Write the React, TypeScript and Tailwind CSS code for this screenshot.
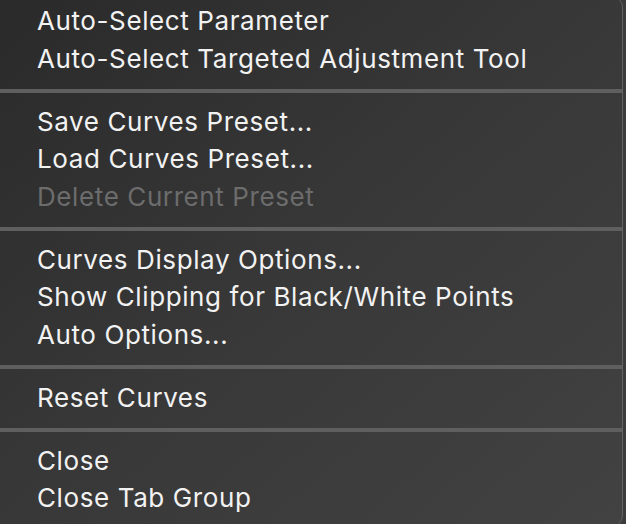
type Item = { label: string; disabled?: boolean }

const groups: Item[][] = [
  [{ label: 'Auto-Select Parameter' }, { label: 'Auto-Select Targeted Adjustment Tool' }],
  [
    { label: 'Save Curves Preset...' },
    { label: 'Load Curves Preset...' },
    { label: 'Delete Current Preset', disabled: true },
  ],
  [
    { label: 'Curves Display Options...' },
    { label: 'Show Clipping for Black/White Points' },
    { label: 'Auto Options...' },
  ],
  [{ label: 'Reset Curves' }],
  [{ label: 'Close' }, { label: 'Close Tab Group' }],
]

function MenuRow({ item }: { item: Item }): JSX.Element {
  return (
    <div
      className={
        item.disabled
          ? 'h-[37.5px] pl-[37px] text-[26px] tracking-[0.6px] leading-[37.5px] text-[#6c6c6c] whitespace-nowrap'
          : 'h-[37.5px] pl-[37px] text-[26px] tracking-[0.6px] leading-[37.5px] text-[#f2f2f2] whitespace-nowrap'
      }
    >
      {item.label}
    </div>
  )
}

function Separator(): JSX.Element {
  return (
    <div className="pt-[12px] pb-[10px]">
      <div className="h-[3.5px] bg-[#5f5f5f]" />
    </div>
  )
}

export default function App(): JSX.Element {
  return (
    <div className="w-[626px] h-[524px] overflow-hidden bg-[#3c3c3c]">
      <div
        className="-mt-[4px] w-[623px] h-[531px] pt-[6px] rounded-r-[12px] border-r border-[#626262] bg-linear-to-br from-[#2a2a2a] via-[#383838] to-[#424242]"
        style={{ fontFamily: 'Inter, "Noto Sans", sans-serif' }}
      >
        {groups.map((group, gi) => (
          <div key={gi}>
            {gi > 0 && <Separator />}
            {group.map((item) => (
              <MenuRow key={item.label} item={item} />
            ))}
          </div>
        ))}
      </div>
    </div>
  )
}
